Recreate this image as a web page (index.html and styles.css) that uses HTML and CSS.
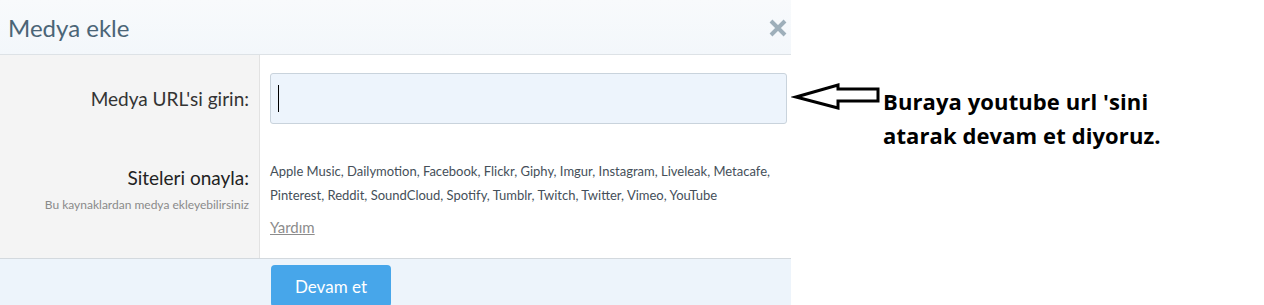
FILE: index.html
```html
<!DOCTYPE html>
<html>
  <head>
    <title>Medya ekle</title>
    <meta charset='UTF-8'>
    <link rel="stylesheet" href="styles.css">
  </head>
  <body>
    <div class='page'>
      <div class='dialog'>
        <div class='dialogHeader'>
          <h1>Medya ekle</h1>
          <svg class='closeIcon' width='18' height='18' viewBox='0 0 18 18'>
            <path d='M2 2 L16 16 M16 2 L2 16' stroke='#9eafba' stroke-width='4' stroke-linecap='butt'/>
          </svg>
        </div>

        <div class='dialogBody'>
          <div class='labelCell urlLabel'>Medya URL'si girin:</div>
          <div class='fieldCell urlField'>
            <div class='urlInput'><span class='caret'></span></div>
          </div>

          <div class='labelCell sitesLabel'>
            <div class='sitesTitle'>Siteleri onayla:</div>
            <div class='sitesHint'>Bu kaynaklardan medya ekleyebilirsiniz</div>
          </div>
          <div class='fieldCell sitesField'>
            <div class='sitesList'>Apple Music, Dailymotion, Facebook, Flickr, Giphy, Imgur, Instagram, Liveleak, Metacafe, Pinterest, Reddit, SoundCloud, Spotify, Tumblr, Twitch, Twitter, Vimeo, YouTube</div>
            <a class='helpLink' href='#'>Yardım</a>
          </div>
        </div>

        <div class='dialogFooter'>
          <button class='continueButton'>Devam et</button>
        </div>
      </div>

      <div class='note'>
        <svg class='noteArrow' width='92' height='32' viewBox='0 0 92 32'>
          <path d='M5 17 L47 5 L47 9 L87 9 L87 21 L47 21 L47 28 Z' fill='#fff' stroke='#000' stroke-width='3' stroke-linejoin='miter'/>
        </svg>
        <p class='noteText'>Buraya youtube url 'sini<br>atarak devam et diyoruz.</p>
      </div>
    </div>
  </body>
</html>
```

FILE: styles.css
```css
body {
  margin: 0;
  background: #fff;
  font-family: Lato, "Open Sans", sans-serif;
}

.page {
  display: flex;
  align-items: flex-start;
}

.dialog {
  width: 791px;
  flex-shrink: 0;
}

.dialogHeader {
  height: 54px;
  display: flex;
  align-items: center;
  justify-content: space-between;
  padding: 0 4px 0 8px;
  background: linear-gradient(#f8fafc, #f3f7fb);
  border-bottom: 1px solid #dde2e6;
}

.dialogHeader h1 {
  margin: 0;
  font-size: 24px;
  font-weight: 400;
  color: #4b6577;
}

.closeIcon {
  margin-top: 2px;
}

.dialogBody {
  display: grid;
  grid-template-columns: 260px 1fr;
}

.labelCell {
  background: #f4f4f4;
  border-right: 1px solid #e2e2e2;
  text-align: right;
  padding-right: 10px;
}

.fieldCell {
  padding-left: 10px;
  padding-right: 4px;
}

.urlLabel {
  padding-top: 18px;
  line-height: 51px;
  font-size: 19px;
  color: #333;
}

.urlField {
  padding-top: 18px;
  padding-bottom: 18px;
}

.urlInput {
  height: 49px;
  background: #edf4fc;
  border: 1px solid #c9d3dc;
  border-radius: 3px;
  display: flex;
  align-items: center;
  padding-left: 7px;
}

.caret {
  width: 1px;
  height: 27px;
  background: #000;
}

.sitesLabel {
  padding-top: 24px;
}

.sitesTitle {
  font-size: 19px;
  line-height: 24px;
  color: #222;
}

.sitesHint {
  margin-top: 6px;
  font-size: 12px;
  line-height: 18px;
  color: #8a8a8a;
}

.sitesField {
  padding-top: 17px;
  padding-bottom: 21px;
}

.sitesList {
  font-size: 13px;
  line-height: 24px;
  color: #454f59;
}

.helpLink {
  display: inline-block;
  margin-top: 10px;
  font-size: 15px;
  line-height: 20px;
  color: #8c8c8c;
}

.dialogFooter {
  background: #edf4fb;
  border-top: 1px solid #d3d9de;
  padding: 6px 0 0 271px;
  height: 46px;
}

.continueButton {
  width: 120px;
  height: 42px;
  border: none;
  border-radius: 4px;
  background: #47a6ea;
  color: #fff;
  font-family: inherit;
  font-size: 17px;
}

.note {
  display: flex;
  align-items: flex-start;
  padding-top: 80px;
}

.noteText {
  margin: 4px 0 0 0;
  font-family: "Open Sans", sans-serif;
  font-weight: 700;
  font-size: 22px;
  letter-spacing: 0.1px;
  line-height: 34px;
  color: #000;
}
```
